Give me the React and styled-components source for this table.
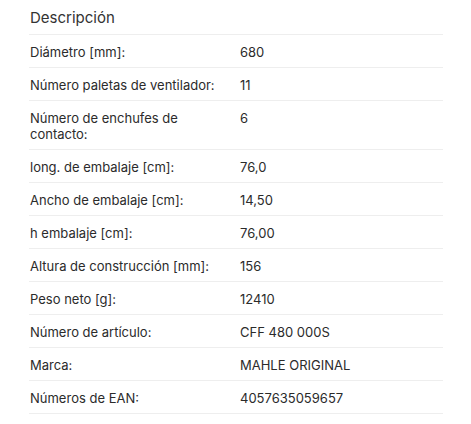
import React from 'react';
import styled, { createGlobalStyle } from 'styled-components';

const GlobalStyle = createGlobalStyle`
  body {
    margin: 0;
    background: #ffffff;
    font-family: Inter, "Liberation Sans", sans-serif;
  }
`

const Panel = styled.section`
  width: 414px;
  margin-left: 29px;
  color: #2b2b2b;
`

const Title = styled.h3`
  margin: 0;
  padding: 9px 1px 0;
  height: 25px;
  font-size: 15px;
  font-weight: 400;
  line-height: 18px;
  color: #333333;
  border-bottom: 1px solid #eeeeee;
`

const Table = styled.div`
  display: flex;
  flex-direction: column;
`

const Row = styled.div`
  display: grid;
  grid-template-columns: 210px 1fr;
  padding: 9px 0 7px 1px;
  border-bottom: 1px solid #eeeeee;
  font-size: 13px;
  line-height: 16px;
`

const Label = styled.div`
  padding-right: 20px;
`

const Value = styled.div``

const specs = [
  ['Diámetro [mm]:', '680'],
  ['Número paletas de ventilador:', '11'],
  ['Número de enchufes de contacto:', '6'],
  ['long. de embalaje [cm]:', '76,0'],
  ['Ancho de embalaje [cm]:', '14,50'],
  ['h embalaje [cm]:', '76,00'],
  ['Altura de construcción [mm]:', '156'],
  ['Peso neto [g]:', '12410'],
  ['Número de artículo:', 'CFF 480 000S'],
  ['Marca:', 'MAHLE ORIGINAL'],
  ['Números de EAN:', '4057635059657'],
]

export default function App() {
  return (
    <>
      <GlobalStyle />
      <Panel>
        <Title>Descripción</Title>
        <Table>
          {specs.map(([label, value]) => (
            <Row key={label}>
              <Label>{label}</Label>
              <Value>{value}</Value>
            </Row>
          ))}
        </Table>
      </Panel>
    </>
  )
}
